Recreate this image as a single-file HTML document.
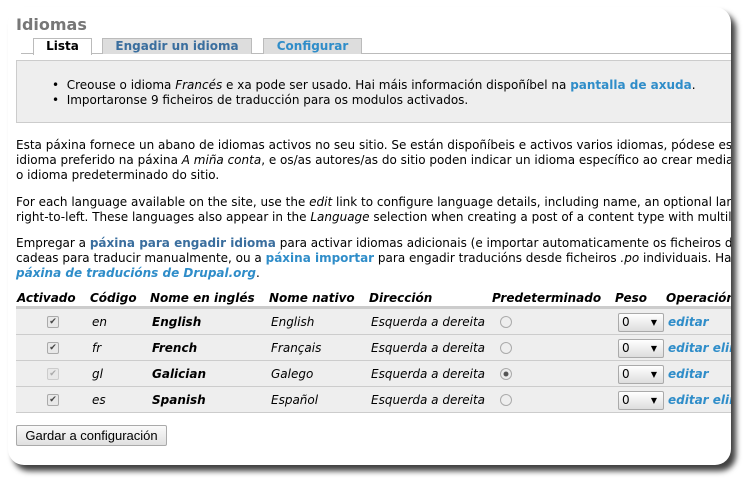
<!DOCTYPE html>
<html><head><meta charset="utf-8"><style>
body{margin:0;width:753px;height:488px;background:#fff;overflow:hidden;font-family:"DejaVu Sans",Verdana,sans-serif;font-size:12px;color:#000;}
.card{position:absolute;left:8px;top:7px;width:723px;height:458px;background:#fff;border-radius:16px;box-shadow:5px 6px 6px rgba(0,0,0,.75);overflow:hidden;}
.a{position:absolute;white-space:nowrap;}
h1{position:absolute;left:8px;top:8px;margin:0;font-size:16px;color:#777;font-weight:bold;}
.tabline{position:absolute;left:13px;right:0;top:46px;border-top:1px solid #bbb;}
.tab{position:absolute;top:31px;height:15px;border:1px solid #bbb;border-bottom:none;background:#ddd;font-weight:bold;text-align:center;line-height:15px;color:#3a6e9e;}
.msg{position:absolute;left:8px;right:-5px;top:53px;height:61px;background:#eee;border-top:1px solid #ccc;border-bottom:1px solid #ccc;border-left:1px solid #ccc;}
.lk{color:#2f8dc9;font-weight:bold;}
.p{line-height:15px;}
.row{position:absolute;left:8px;right:0;height:25px;background:#eee;border-bottom:1px solid #ccc;}
.th{font-weight:bold;font-style:italic;top:284px;}
.cb{position:absolute;width:10px;height:10px;border:1px solid #aaa;border-radius:2px;background:#e8e8e8;font-size:9px;line-height:10px;text-align:center;color:#444;}
.rd{position:absolute;width:10px;height:10px;border:1px solid #aaa;border-radius:50%;background:#eee;}
.sel{position:absolute;width:41px;height:17px;border:1px solid #aaa;border-radius:2px;background:linear-gradient(#fff,#ddd);line-height:17px;padding-left:3px;box-sizing:content-box;}
.sel:after{content:"▼";position:absolute;right:6px;top:0;font-size:8px;}
.it{font-style:italic}
</style></head><body>
<div class="card">
<h1>Idiomas</h1>
<div class="tabline"></div>
<div class="tab" style="left:25px;width:57px;background:#fff;color:#000;height:16px;">Lista</div>
<div class="tab" style="left:94px;width:148px;">Engadir un idioma</div>
<div class="tab" style="left:255px;width:97px;color:#2f8dc9;">Configurar</div>
<div class="msg"></div>
<div class="a" style="left:44px;top:71px;">•&nbsp;&nbsp;Creouse o idioma <i>Francés</i> e xa pode ser usado. Hai máis información dispoñíbel na <span class="lk">pantalla de axuda</span>.</div>
<div class="a" style="left:44px;top:86px;">•&nbsp;&nbsp;Importaronse 9 ficheiros de traducción para os modulos activados.</div>
<div class="a p" style="left:8px;top:131px;">Esta páxina fornece un abano de idiomas activos no seu sitio. Se están dispoñíbeis e activos varios idiomas, pódese escoller<br>idioma preferido na páxina <i>A miña conta</i>, e os/as autores/as do sitio poden indicar un idioma específico ao crear media<br>o idioma predeterminado do sitio.</div>
<div class="a p" style="left:8px;top:188px;">For each language available on the site, use the <i>edit</i> link to configure language details, including name, an optional language<br>right-to-left. These languages also appear in the <i>Language</i> selection when creating a post of a content type with multilingual</div>
<div class="a p" style="left:8px;top:229px;">Empregar a <span class="lk" style="color:#3a6e9e">páxina para engadir idioma</span> para activar idiomas adicionais (e importar automaticamente os ficheiros de<br>cadeas para traducir manualmente, ou a <span class="lk">páxina importar</span> para engadir traducións desde ficheiros <i>.po</i> individuais. Hai<br><span class="lk it">páxina de traducións de Drupal.org</span>.</div>
<div class="a th" style="left:9px">Activado</div>
<div class="a th" style="left:82px">Código</div>
<div class="a th" style="left:142px">Nome en inglés</div>
<div class="a th" style="left:261px">Nome nativo</div>
<div class="a th" style="left:361px">Dirección</div>
<div class="a th" style="left:484px">Predeterminado</div>
<div class="a th" style="left:607px">Peso</div>
<div class="a th" style="left:658px">Operacións</div>
<div style="position:absolute;left:8px;right:0;top:299px;border-top:3px solid #ccc;"></div>
<div class="row" style="top:302px"></div>
<div class="row" style="top:328px"></div>
<div class="row" style="top:354px"></div>
<div class="row" style="top:380px"></div>
<div class="cb" style="left:39px;top:309px">✔</div>
<div class="cb" style="left:39px;top:335px">✔</div>
<div class="cb" style="left:39px;top:361px;color:#aaa;border-color:#ccc">✔</div>
<div class="cb" style="left:39px;top:387px">✔</div>
<div class="a it" style="left:84px;top:308px">en</div><div class="a it" style="left:144px;top:308px;font-weight:bold">English</div><div class="a it" style="left:263px;top:308px">English</div><div class="a it" style="left:363px;top:308px">Esquerda a dereita</div>
<div class="a it" style="left:84px;top:334px">fr</div><div class="a it" style="left:144px;top:334px;font-weight:bold">French</div><div class="a it" style="left:263px;top:334px">Français</div><div class="a it" style="left:363px;top:334px">Esquerda a dereita</div>
<div class="a it" style="left:84px;top:360px">gl</div><div class="a it" style="left:144px;top:360px;font-weight:bold">Galician</div><div class="a it" style="left:263px;top:360px">Galego</div><div class="a it" style="left:363px;top:360px">Esquerda a dereita</div>
<div class="a it" style="left:84px;top:386px">es</div><div class="a it" style="left:144px;top:386px;font-weight:bold">Spanish</div><div class="a it" style="left:263px;top:386px">Español</div><div class="a it" style="left:363px;top:386px">Esquerda a dereita</div>
<div class="rd" style="left:492px;top:309px"></div>
<div class="rd" style="left:492px;top:335px"></div>
<div class="rd" style="left:492px;top:361px;background:radial-gradient(#555 30%,#eee 40%)"></div>
<div class="rd" style="left:492px;top:387px"></div>
<div class="sel" style="left:610px;top:306px">0</div>
<div class="sel" style="left:610px;top:332px">0</div>
<div class="sel" style="left:610px;top:358px">0</div>
<div class="sel" style="left:610px;top:384px">0</div>
<div class="a lk it" style="left:660px;top:308px">editar</div>
<div class="a lk it" style="left:660px;top:334px">editar eliminar</div>
<div class="a lk it" style="left:660px;top:360px">editar</div>
<div class="a lk it" style="left:660px;top:386px">editar eliminar</div>
<div class="a" style="left:8px;top:418px;width:149px;height:19px;border:1px solid #aaa;border-radius:2px;background:linear-gradient(#fafafa,#e0e0e0);font-family:'Liberation Sans',Arial,sans-serif;font-size:13px;line-height:19px;text-align:center;">Gardar a configuración</div>
</div>
</body></html>
